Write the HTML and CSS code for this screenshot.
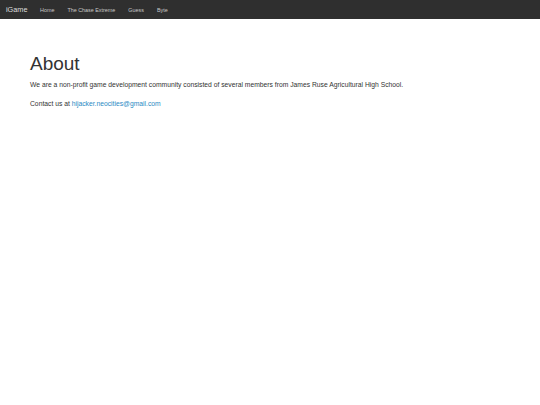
FILE: index.html
```
<!DOCTYPE html>
<html>
<head>
<meta charset="utf-8">
<link rel="stylesheet" href="styles.css">
</head>
<body>
<nav class="navbar">
  <a class="brand" href="#">iGame</a>
  <ul class="nav">
    <li><a href="#">Home</a></li>
    <li><a href="#">The Chase Extreme</a></li>
    <li><a href="#">Guess</a></li>
    <li><a href="#">Byte</a></li>
  </ul>
</nav>
<main class="content">
  <h1 class="title">About</h1>
  <p class="text">We are a non-profit game development community consisted of several members from James Ruse Agricultural High School.</p>
  <p class="text">Contact us at <a class="link" href="#">hijacker.neocities@gmail.com</a></p>
</main>
</body>
</html>
```
FILE: styles.css
```
html, body {
  margin: 0;
  padding: 0;
  background: #fff;
  font-family: "Liberation Sans", Arial, sans-serif;
  color: #333;
}
.navbar {
  display: flex;
  align-items: center;
  height: 19px;
  background: #2f2f2f;
  padding: 0 6px;
}
.brand {
  color: #ddd;
  font-size: 7.3px;
  text-decoration: none;
  margin-right: 6px;
}
.nav {
  display: flex;
  list-style: none;
  margin: 0;
  padding: 0;
}
.nav a {
  display: block;
  color: #c8c8c8;
  font-size: 5.4px;
  text-decoration: none;
  padding: 0 6.5px;
}
.content {
  padding: 0 30px;
}
.title {
  font-size: 19px;
  font-weight: 500;
  margin: 35px 0 5px;
  line-height: 1.1;
}
.text {
  font-size: 6.75px;
  line-height: 10px;
  margin: 0 0 9px;
}
.link {
  color: #2a8ac4;
  text-decoration: none;
}
```
